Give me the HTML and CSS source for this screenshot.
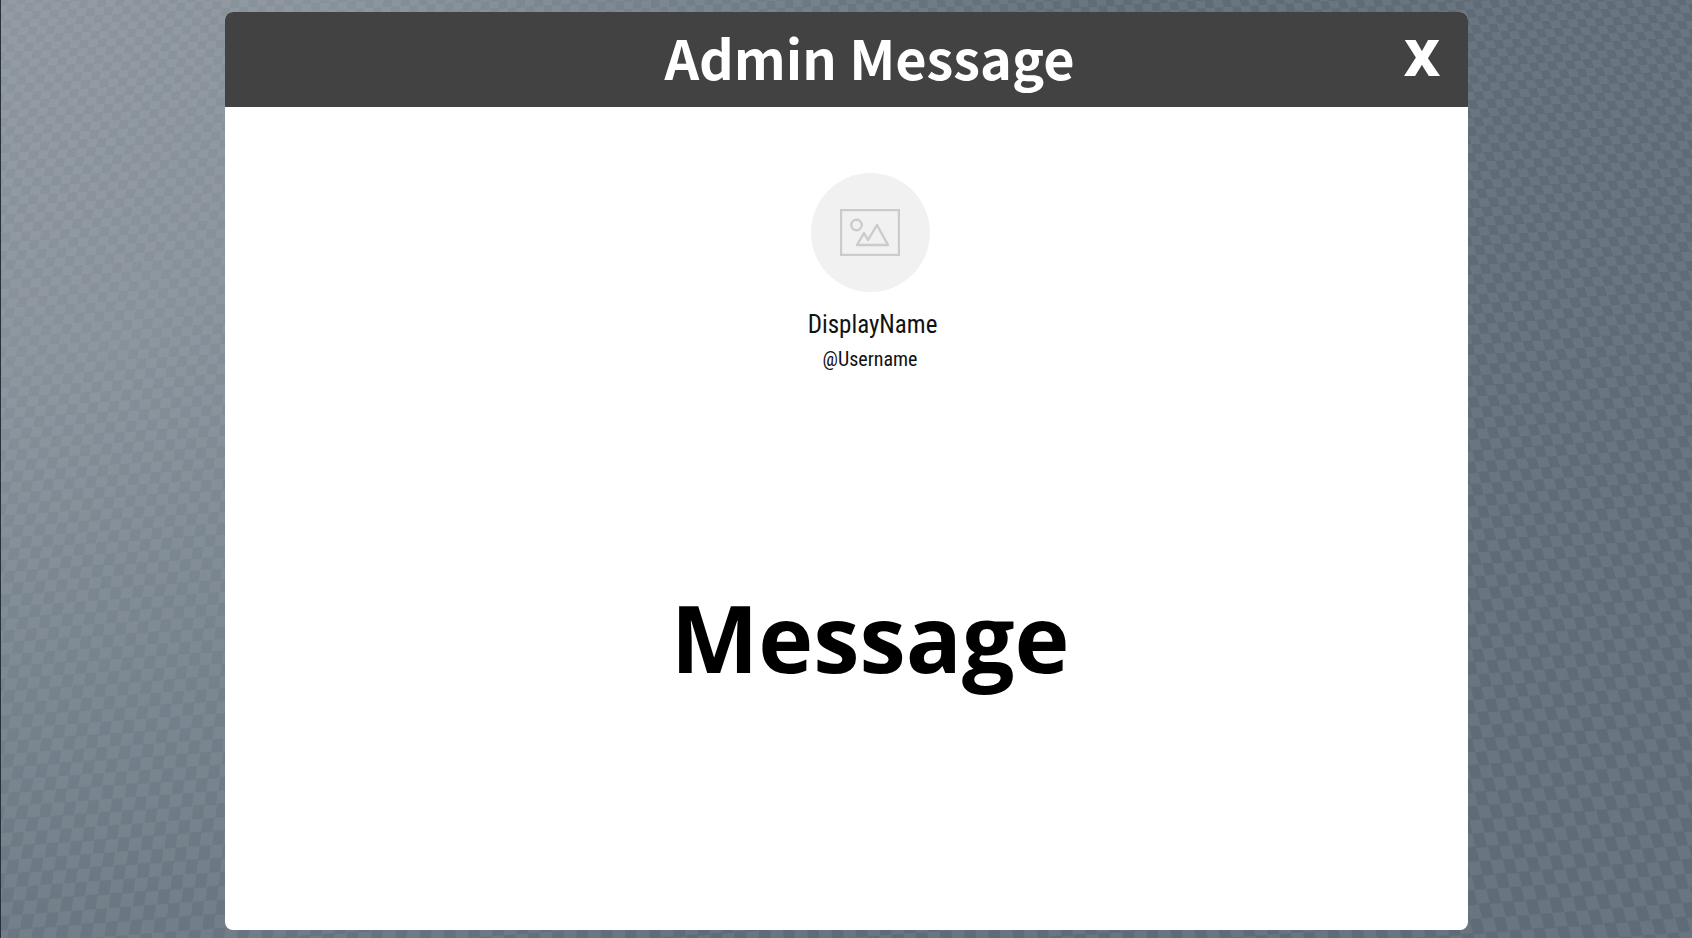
FILE: index.html
```
<!DOCTYPE html>
<html lang="en">
<head>
    <meta charset="UTF-8">
    <meta name="viewport" content="width=device-width, initial-scale=1.0">
    <title>Admin Message</title>
    <link rel="stylesheet" href="styles.css">
</head>
<body>

<div class="backdrop"></div>

<main class="modal">
    <header class="modal-header">
        <h1>Admin Message</h1>
        <button class="close-button" id="closeButton" aria-label="Close">X</button>
    </header>
    <div class="modal-body">
        <div class="avatar">
            <svg viewBox="0 0 60 47" width="60" height="47" fill="none" stroke="#cbcbcb" stroke-width="2.4">
                <rect x="1" y="1" width="58" height="45"/>
                <circle cx="16.5" cy="16" r="5.2"/>
                <path d="M17 36L24 24L28 31L37 16L48 36Z" stroke-linejoin="round"/>
            </svg>
        </div>
        <div class="display-name">DisplayName</div>
        <div class="username">@Username</div>
        <p class="message">Message</p>
    </div>
</main>

</body>
</html>
```

FILE: styles.css
```
* {
    box-sizing: border-box;
}
body {
    display: flex;
    min-height: 100vh;
    margin: 0;
    padding: 12px 224px 8px 225px;
    font-family: "Open Sans", sans-serif;
}
/* tilted checkerboard behind the modal */
.backdrop {
    position: fixed;
    inset: 0;
    z-index: -1;
    overflow: hidden;
    border-left: 1px solid #27313b;
    background: radial-gradient(ellipse 1100px 1200px at 0 0, #8d959e 0%, #87919a 30%, #6b7883 75%, #5f6c78 100%);
}
.backdrop::before {
    content: "";
    position: absolute;
    inset: -300px;
    background: repeating-conic-gradient(rgba(255, 255, 255, 0.06) 0 25%, transparent 0 50%) 0 0 / 21px 23px;
    transform: perspective(1000px) rotateX(18deg) rotate(-4deg);
}
.modal {
    display: flex;
    flex: 1;
    flex-direction: column;
    border-radius: 8px;
    background: #fff;
    overflow: hidden;
}
.modal-header {
    display: grid;
    grid-template-columns: 80px 1fr 32px;
    align-items: start;
    height: 95px;
    padding: 5px 30px 0 0;
    background: #424242;
    color: #fff;
}
.modal-header h1 {
    grid-column: 2;
    margin: 0;
    padding-left: 28px;
    font-family: "Noto Sans CJK SC", sans-serif;
    font-size: 54px;
    line-height: 80px;
    text-align: center;
}
.close-button {
    display: flex;
    justify-content: center;
    padding: 0;
    border: none;
    background: none;
    color: #fff;
    font-family: "Open Sans", sans-serif;
    font-size: 50px;
    font-weight: 800;
    line-height: 80px;
    cursor: pointer;
}
.modal-body {
    display: flex;
    flex: 1;
    flex-direction: column;
    align-items: center;
    padding: 66px 0 0 47px;
}
.avatar {
    display: flex;
    justify-content: center;
    align-items: center;
    width: 119px;
    height: 119px;
    border-radius: 50%;
    background: #f1f1f1;
}
.display-name,
.username {
    color: #111;
    font-family: "Roboto Condensed", "Liberation Sans Narrow", sans-serif;
}
.display-name {
    margin-top: 15px;
    padding-left: 5px;
    font-size: 25px;
    line-height: 36px;
}
.username {
    font-size: 20px;
    line-height: 32px;
}
.message {
    margin: 202px 0 0;
    color: #000;
    font-size: 93px;
    font-weight: 700;
    line-height: 120px;
}
```
